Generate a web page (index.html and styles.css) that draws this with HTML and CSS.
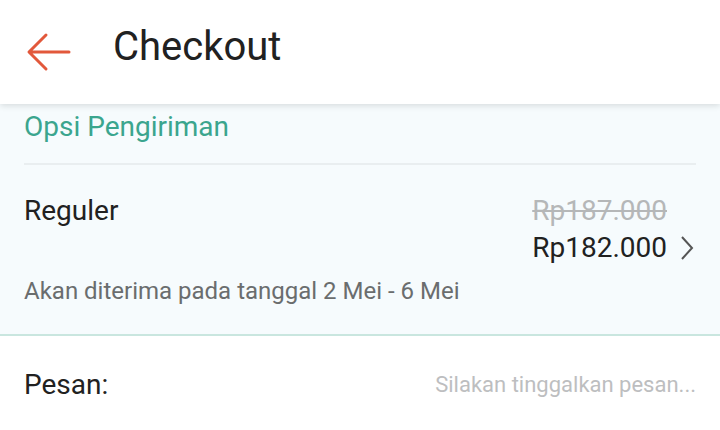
FILE: index.html
```html
<!DOCTYPE html>
<html>
<head>
  <meta charset="utf-8">
  <link rel="stylesheet" href="styles.css">
</head>
<body>
    <div class="header">
        <a href="#" class="back">
            <svg width="46" height="40" viewBox="0 0 46 40">
                <path d="M43 20 H4 M20 3 L3 20 L20 37" fill="none" stroke="#e2583b" stroke-width="3" stroke-linecap="round" stroke-linejoin="round"/>
            </svg>
        </a>
        <h1 class="title">Checkout</h1>
    </div>

    <div class="shipping">
        <div class="section-title">Opsi Pengiriman</div>
        <div class="option">
            <div class="option-row">
                <div class="option-name">Reguler</div>
                <div class="prices">
                    <div class="old-price">Rp187.000</div>
                    <div class="price-line">
                        <span class="price">Rp182.000</span>
                        <svg class="chevron" width="14" height="24" viewBox="0 0 14 24">
                            <path d="M2 1 L12 12 L2 23" fill="none" stroke="#555" stroke-width="2"/>
                        </svg>
                    </div>
                </div>
            </div>
            <div class="eta">Akan diterima pada tanggal 2 Mei - 6 Mei</div>
        </div>
    </div>

    <div class="message">
        <label for="pesan">Pesan:</label>
        <input type="text" id="pesan" placeholder="Silakan tinggalkan pesan...">
    </div>
</body>
</html>
```

FILE: styles.css
```css
* {
    padding: 0px;
    margin: 0px;
    box-sizing: border-box;
}

body {
    background-color: #fff;
    font-family: Roboto, "Liberation Sans", sans-serif;
    color: #212121;
}

.header {
    position: relative;
    z-index: 1;
    height: 104px;
    display: flex;
    align-items: center;
    background-color: #fff;
    box-shadow: 0px 2px 6px rgba(0, 0, 0, 0.12);
}

.back {
    display: flex;
    margin-left: 26px;
    margin-right: 41px;
}

.title {
    font-size: 40px;
    font-weight: 400;
    line-height: 47px;
    color: #212121;
    padding-bottom: 11px;
}

.shipping {
    background-color: #f6fbfd;
    border-bottom: 2px solid #c9e6df;
    padding: 0 24px;
    height: 232px;
}

.section-title {
    color: #3ba58e;
    font-size: 28px;
    line-height: 33px;
    padding: 6px 0 20px;
    border-bottom: 2px solid #e9eef0;
}

.option {
    padding-top: 29px;
}

.option-row {
    display: flex;
    justify-content: space-between;
}

.option-name {
    font-size: 28px;
    line-height: 33px;
}

.prices {
    display: flex;
    flex-direction: column;
    align-items: flex-end;
}

.old-price {
    font-size: 28px;
    line-height: 33px;
    color: #b5b7b8;
    text-decoration: line-through;
    margin-right: 29px;
}

.price-line {
    display: flex;
    align-items: center;
    margin-top: 4px;
}

.price {
    font-size: 28px;
    line-height: 33px;
}

.chevron {
    margin-left: 13px;
    margin-right: 2px;
}

.eta {
    font-size: 24px;
    line-height: 28px;
    color: #6a6d6e;
    margin-top: 13px;
}

.message {
    display: flex;
    justify-content: space-between;
    align-items: center;
    padding: 0 24px;
    height: 97px;
}

.message label {
    font-size: 28px;
    line-height: 33px;
    color: #212121;
}

.message input {
    border: none;
    outline: none;
    background: transparent;
    text-align: right;
    font-family: inherit;
    font-size: 22px;
    width: 340px;
}

.message input::placeholder {
    color: #bdbec0;
}
```
